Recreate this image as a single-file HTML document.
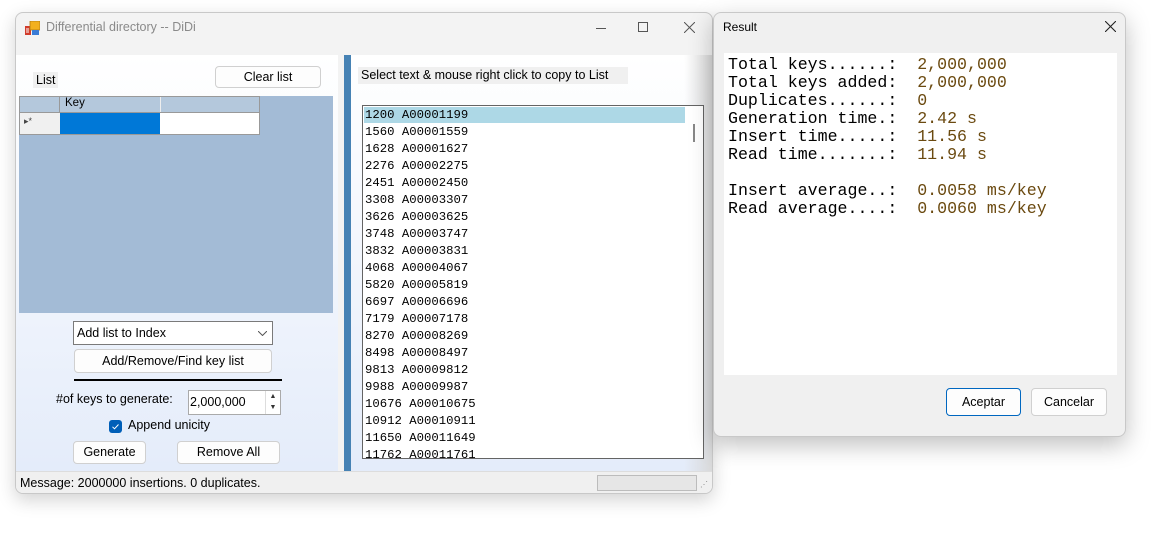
<!DOCTYPE html>
<html><head><meta charset="utf-8"><style>
*{box-sizing:border-box;margin:0;padding:0}
body{width:1164px;height:558px;background:#fff;position:relative;overflow:hidden;font-family:"Segoe UI","Liberation Sans",sans-serif;font-size:12px;color:#000}
.abs{position:absolute}
.btn{position:absolute;background:#fdfdfd;border:1px solid #d0d0d0;border-radius:4px;text-align:center;font-size:12.5px}
.mono{font-family:"Liberation Mono",monospace}
</style></head><body>
<div class="abs" style="left:15px;top:12px;width:698px;height:482px;border:1px solid #c8c8c8;border-radius:8px;background:#f3f3f3;box-shadow:0 6px 18px rgba(0,0,0,.18);overflow:hidden">
  <svg class="abs" style="left:9px;top:8px" width="15" height="15" viewBox="0 0 15 15"><rect x="0" y="5" width="6" height="9" fill="#d13b2b"/><rect x="1" y="7" width="3" height="5" fill="#fff" opacity=".5"/><rect x="5" y="0" width="10" height="9" fill="#f2b01e" stroke="#b07a10" stroke-width=".8"/><rect x="7" y="9" width="7" height="5" fill="#3a7bd5"/></svg>
  <div class="abs" style="left:30px;top:7px;font-size:12.5px;color:#8a8a8a">Differential directory -- DiDi</div>
  <div class="abs" style="left:580px;top:15px;width:10px;height:1px;background:#555"></div>
  <div class="abs" style="left:622px;top:9px;width:10px;height:10px;border:1px solid #555"></div>
  <svg class="abs" style="left:668px;top:9px" width="11" height="11"><path d="M0 0L11 11M11 0L0 11" stroke="#555" stroke-width="1"/></svg>
  <div class="abs" style="left:0;top:42px;width:322px;height:416px;background:linear-gradient(#fff,#e4ecfa)">
    <div class="abs" style="left:17px;top:17px;padding:0 3px;background:#f0f0f0;font-size:12.5px;line-height:16px">List</div>
    <div class="btn" style="left:199px;top:11px;width:106px;height:22px;line-height:20px">Clear list</div>
    <div class="abs" style="left:3px;top:41px;width:314px;height:217px;background:#a3bbd6">
      <div class="abs" style="left:0;top:0;width:241px;height:17px;background:#b4c8dc;border:1px solid #999"></div>
      <div class="abs" style="left:40px;top:0;width:1px;height:39px;background:#999"></div>
      <div class="abs" style="left:141px;top:1px;width:1px;height:15px;background:#eee"></div>
      <div class="abs" style="left:46px;top:1px;font-size:11.5px">Key</div>
      <div class="abs" style="left:0;top:16px;width:241px;height:23px;border:1px solid #999;background:#f0f0f0"></div>
      <div class="abs" style="left:41px;top:17px;width:100px;height:21px;background:#0078d7"></div>
      <div class="abs" style="left:141px;top:17px;width:99px;height:21px;background:#fff"></div>
      <div class="abs" style="left:5px;top:20px;font-size:9px;color:#444">▸*</div>
    </div>
    <div class="abs" style="left:57px;top:266px;width:200px;height:24px;background:#fff;border:1px solid #7a7a7a;font-size:12.5px;line-height:22px;padding-left:3px">Add list to Index
      <svg class="abs" style="right:5px;top:9px" width="9" height="5"><path d="M0 0L4.5 4.5L9 0" fill="none" stroke="#555"/></svg></div>
    <div class="btn" style="left:58px;top:294px;width:198px;height:24px;line-height:22px">Add/Remove/Find key list</div>
    <div class="abs" style="left:58px;top:324px;width:208px;height:2px;background:#000"></div>
    <div class="abs" style="left:40px;top:337px;font-size:12.5px">#of keys to generate:</div>
    <div class="abs" style="left:172px;top:335px;width:93px;height:25px;background:#fff;border:1px solid #aaa;font-size:12.5px;line-height:23px;padding-left:1px">2,000,000
      <div class="abs" style="right:0;top:0;width:15px;height:23px;border-left:1px solid #ddd;font-size:7px;line-height:11px;text-align:center;color:#333">▲<br>▼</div></div>
    <div class="abs" style="left:93px;top:365px;width:13px;height:13px;background:#005fb8;border-radius:3px"><svg width="13" height="13"><path d="M3.5 6.8L5.5 8.8L9.5 4.5" fill="none" stroke="#fff" stroke-width="1"/></svg></div>
    <div class="abs" style="left:112px;top:363px;font-size:12.5px">Append unicity</div>
    <div class="btn" style="left:57px;top:386px;width:73px;height:23px;line-height:21px">Generate</div>
    <div class="btn" style="left:161px;top:386px;width:103px;height:23px;line-height:21px">Remove All</div>
  </div>
  <div class="abs" style="left:328px;top:42px;width:7px;height:416px;background:#4682b4"></div>
  <div class="abs" style="left:335px;top:42px;width:362px;height:416px;background:linear-gradient(90deg,rgba(255,255,255,0) 92%,#d8d8d8),linear-gradient(#fff,#e4ecfa)">
    <div class="abs" style="left:7px;top:12px;width:270px;height:17px;background:#f0f0f0;font-size:12.5px;line-height:16px;padding-left:3px">Select text &amp; mouse right click to copy to List</div>
    <div class="abs mono" style="left:11px;top:50px;width:342px;height:354px;background:#fff;border:1px solid #646464;overflow:hidden;font-size:12.3px;line-height:17px">
      <div class="abs" style="left:1px;top:1px;width:321px;height:16px;background:#add8e6"></div>
      <div class="abs" style="left:330px;top:18px;width:2px;height:18px;background:#888"></div>
      <div class="abs" style="left:2px;top:1px;white-space:pre">1200 A00001199
1560 A00001559
1628 A00001627
2276 A00002275
2451 A00002450
3308 A00003307
3626 A00003625
3748 A00003747
3832 A00003831
4068 A00004067
5820 A00005819
6697 A00006696
7179 A00007178
8270 A00008269
8498 A00008497
9813 A00009812
9988 A00009987
10676 A00010675
10912 A00010911
11650 A00011649
11762 A00011761</div>
    </div>
  </div>
  <div class="abs" style="left:0;top:458px;width:698px;height:24px;border-top:1px solid #ddd;background:#f0f0f0">
    <div class="abs" style="left:4px;top:4px;font-size:12.5px">Message: 2000000 insertions. 0 duplicates.</div>
    <div class="abs" style="left:581px;top:3px;width:100px;height:16px;border:1px solid #bcbcbc;background:#e6e6e6"></div>
    <div class="abs" style="left:684px;top:8px;font-size:8px;color:#888;letter-spacing:-1px">⋰</div>
  </div>
</div>
<div class="abs" style="left:713px;top:12px;width:413px;height:425px;border:1px solid #c8c8c8;border-radius:8px;background:#f0f0f0;box-shadow:0 8px 24px rgba(0,0,0,.25);overflow:hidden">
  <div class="abs" style="left:9px;top:7px;font-size:12px">Result</div>
  <svg class="abs" style="left:391px;top:8px" width="11" height="11"><path d="M0 0L11 11M11 0L0 11" stroke="#222" stroke-width="1.1"/></svg>
  <div class="abs mono" style="left:10px;top:40px;width:393px;height:322px;background:#fff;font-size:16.6px;line-height:18px;padding:3px 0 0 4px;white-space:pre;color:#000">Total keys......:  <span style="color:#6b4a10">2,000,000</span>
Total keys added:  <span style="color:#6b4a10">2,000,000</span>
Duplicates......:  <span style="color:#6b4a10">0</span>
Generation time.:  <span style="color:#6b4a10">2.42 s</span>
Insert time.....:  <span style="color:#6b4a10">11.56 s</span>
Read time.......:  <span style="color:#6b4a10">11.94 s</span>

Insert average..:  <span style="color:#6b4a10">0.0058 ms/key</span>
Read average....:  <span style="color:#6b4a10">0.0060 ms/key</span></div>
  <div class="btn" style="left:232px;top:375px;width:75px;height:28px;line-height:26px;border:1px solid #0067c0;font-size:12.5px">Aceptar</div>
  <div class="btn" style="left:317px;top:375px;width:76px;height:28px;line-height:26px;font-size:12.5px">Cancelar</div>
</div>
</body></html>
